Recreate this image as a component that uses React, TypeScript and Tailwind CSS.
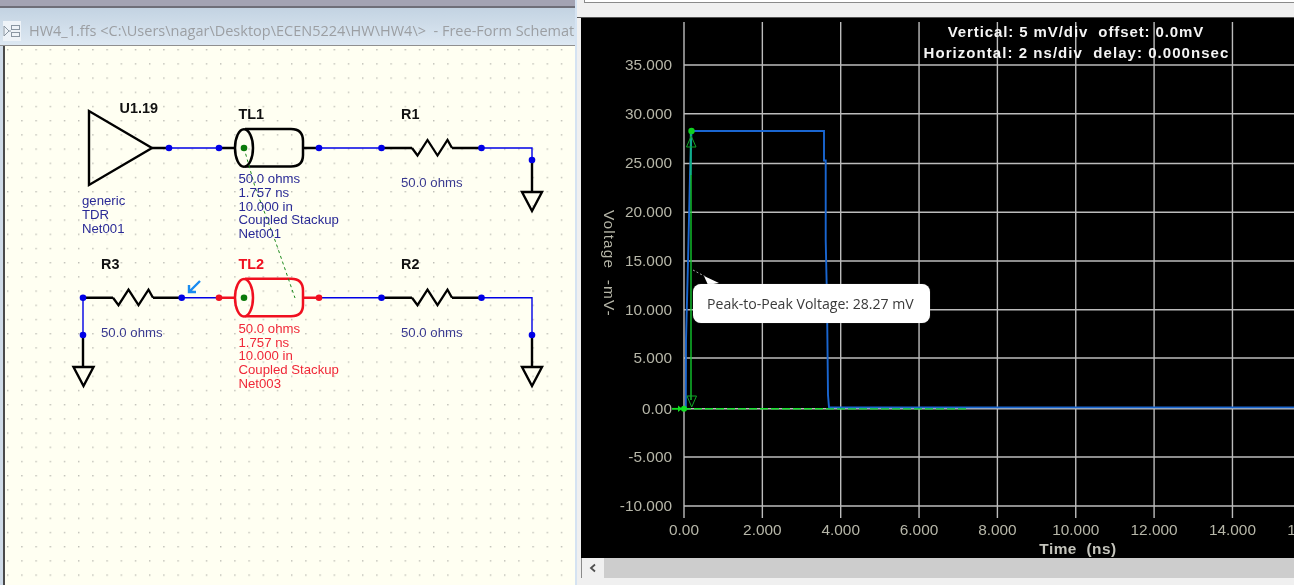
const LABEL = { fontFamily: '"Liberation Sans", Arial, sans-serif' };
const PRE = { whiteSpace: "pre" } as const;

function Node({ x, y, c = "#0000e6" }: { x: number; y: number; c?: string }) {
  return <circle cx={x} cy={y} r={3.3} fill={c} />;
}

function Ground({ x, y }: { x: number; y: number }) {
  return <polygon points={`${x - 10},${y} ${x + 10},${y} ${x},${y + 19}`} fill="none" stroke="#000" strokeWidth={2.4} />;
}

function Res({ x, y }: { x: number; y: number }) {
  const p = [[0, 0], [5.5, 7.5], [15.5, -8], [25.5, 7.5], [35.5, -8], [40, 0]].map(([a, b]) => `${x + a},${y + b}`).join(" ");
  return <polyline points={p} fill="none" stroke="#000" strokeWidth={2.3} strokeLinejoin="miter" />;
}

function Cyl({ y, c }: { y: number; c: string }) {
  const t = y - 19;
  const b = y + 18.5;
  return (
    <g fill="none" stroke={c} strokeWidth={2.5}>
      <ellipse cx={244} cy={y} rx={9} ry={18.7} />
      <path d={`M245 ${t}H291Q303 ${t} 303 ${y - 7}V${y + 7}Q303 ${b} 291 ${b}H245`} />
    </g>
  );
}

function Lines({ x, y, items, fill }: { x: number; y: number; items: string[]; fill: string }) {
  return (
    <g fill={fill} fontSize={13.2} style={LABEL}>
      {items.map((t, i) => (
        <text key={t} x={x} y={y + i * 13.8}>{t}</text>
      ))}
    </g>
  );
}

function Title({ x, y, t, fill = "#111" }: { x: number; y: number; t: string; fill?: string }) {
  return <text x={x} y={y} fill={fill} fontSize={14.4} fontWeight={700} style={LABEL}>{t}</text>;
}

function Schematic() {
  const blue = "#0000e6";
  const red = "#f01020";
  const rowA = 148;
  const rowB = 297.7;
  return (
    <svg viewBox="5 46 570 539" width={570} height={539} className="block">
      <defs>
        <pattern id="dots" x={7} y={49} width={14.2} height={14.2} patternUnits="userSpaceOnUse">
          <rect width={1.4} height={1.4} fill="#bcbcb4" />
        </pattern>
      </defs>
      <rect x={5} y={46} width={570} height={539} fill="#fffff2" />
      <rect x={5} y={46} width={570} height={539} fill="url(#dots)" />

      <polygon points="89,111 89,185 152,148" fill="none" stroke="#000" strokeWidth={2.4} />
      <g stroke={blue} strokeWidth={1.4} fill="none">
        <path d={`M169 ${rowA}H219M319 ${rowA}H381.5M481.5 ${rowA}H532V160`} />
        <path d={`M181.7 ${rowB}H219M319 ${rowB}H381.5M481.5 ${rowB}H532V335M83 ${rowB}V335`} />
      </g>
      <g stroke="#000" strokeWidth={2.4} fill="none">
        <path d={`M152 ${rowA}H169M219 ${rowA}H236M304 ${rowA}H319M381.5 ${rowA}H412M452 ${rowA}H481.5M532 160V192`} />
        <path d={`M83 ${rowB}H113M153 ${rowB}H181.7M381.5 ${rowB}H412M452 ${rowB}H481.5M83 335V367M532 335V367`} />
      </g>
      <path d={`M219 ${rowB}H236M304 ${rowB}H319`} stroke={red} strokeWidth={2.4} fill="none" />
      <Res x={412} y={rowA} />
      <Res x={113} y={rowB} />
      <Res x={412} y={rowB} />
      <Cyl y={rowA} c="#000" />
      <Cyl y={rowB} c={red} />
      <Ground x={532} y={192} />
      <Ground x={83.5} y={367} />
      <Ground x={532} y={367} />

      <path d="M244 148L255 187L276 243L295 298" stroke="#1c8a1c" strokeWidth={1} strokeDasharray="3 3" fill="none" />

      {[[169, rowA], [219, rowA], [319, rowA], [381.5, rowA], [481.5, rowA], [532, 160], [83, rowB], [181.7, rowB], [381.5, rowB], [481.5, rowB], [532, 335], [83, 335]].map(([x, y]) => (
        <Node key={`${x}-${y}`} x={x} y={y} />
      ))}
      <Node x={219} y={rowB} c={red} />
      <Node x={319} y={rowB} c={red} />
      <Node x={244} y={rowA} c="#0a7a0a" />
      <Node x={244} y={rowB} c="#0a7a0a" />

      <path d="M200 281L189.5 291.5M189 285V292H196" stroke="#1a8cf0" strokeWidth={2.4} fill="none" />

      <Title x={119.5} y={112.5} t="U1.19" />
      <Title x={238.5} y={119} t="TL1" />
      <Title x={401} y={119} t="R1" />
      <Title x={101} y={269} t="R3" />
      <Title x={238.5} y={269} t="TL2" fill={red} />
      <Title x={401} y={269} t="R2" />

      <Lines x={82} y={205} fill="#2a2a96" items={["generic", "TDR", "Net001"]} />
      <Lines x={238.5} y={183} fill="#2a2a96" items={["50.0 ohms", "1.757 ns", "10.000 in", "Coupled Stackup", "Net001"]} />
      <Lines x={238.5} y={332.8} fill="#f02838" items={["50.0 ohms", "1.757 ns", "10.000 in", "Coupled Stackup", "Net003"]} />
      <Lines x={401} y={186.5} fill="#3a3a90" items={["50.0 ohms"]} />
      <Lines x={101} y={336.5} fill="#3a3a90" items={["50.0 ohms"]} />
      <Lines x={401} y={336.5} fill="#3a3a90" items={["50.0 ohms"]} />
    </svg>
  );
}

const xs = [0, 1, 2, 3, 4, 5, 6, 7, 8].map((i) => 684 + i * 78.35);
const ys = [65, 113.7, 163.5, 212.3, 261, 309.7, 358, 408.7, 457, 506];
const yLabels = ["35.000", "30.000", "25.000", "20.000", "15.000", "10.000", "5.000", "0.00", "-5.000", "-10.000"];
const xLabels = ["0.00", "2.000", "4.000", "6.000", "8.000", "10.000", "12.000", "14.000", "16.000"];

function Plot() {
  const grid = "#bcbcbc";
  const tick = "#b6b6a8";
  return (
    <svg viewBox="581 18 713 540" width={713} height={540} className="block" style={LABEL}>
      <rect x={581} y={18} width={713} height={540} fill="#000" />
      <g stroke={grid} strokeWidth={1.4}>
        {xs.map((x) => <line key={x} x1={x} x2={x} y1={22} y2={518} />)}
        {ys.map((y) => <line key={y} x1={684} x2={1294} y1={y} y2={y} />)}
      </g>
      <g fill={tick} fontSize={15.4} textAnchor="end">
        {ys.map((y, i) => <text key={y} x={672} y={y + 4.8}>{yLabels[i]}</text>)}
      </g>
      <g fill={tick} fontSize={15.4} textAnchor="middle">
        {xs.map((x, i) => <text key={x} x={x} y={535}>{xLabels[i]}</text>)}
      </g>
      <text transform="translate(604 210) rotate(90)" fill={tick} fontSize={15.4} letterSpacing={1.1} style={PRE}>{"Voltage  -mV-"}</text>
      <text x={1078} y={554} fill="#c4c4bc" fontSize={15.4} fontWeight={700} textAnchor="middle" letterSpacing={0.5} style={PRE}>{"Time  (ns)"}</text>
      <g fill="#f4f4f4" fontSize={15} fontWeight={700} textAnchor="middle">
        <text x={1076} y={37} letterSpacing={0.9} style={PRE}>{"Vertical: 5 mV/div  offset: 0.0mV"}</text>
        <text x={1076.5} y={58} letterSpacing={1.05} style={PRE}>{"Horizontal: 2 ns/div  delay: 0.000nsec"}</text>
      </g>

      <line x1={672} x2={967} y1={408.7} y2={408.7} stroke="#18e030" strokeWidth={1.4} strokeDasharray="8 3" />
      <path d="M684 408.5L685.8 408L686 340L688 262L690 175L691.5 131H824V160.5H825.7V240L827 300L828 395L829 407.4H1294" stroke="#1a66d0" strokeWidth={1.9} fill="none" />
      <line x1={691} x2={691} y1={175} y2={400} stroke="#12c82e" strokeWidth={1.4} />
      <line x1={690.8} x2={690.8} y1={131} y2={175} stroke="#10b088" strokeWidth={2} />
      <line x1={672} x2={684} y1={408.7} y2={408.7} stroke="#10e020" strokeWidth={1.6} />
      <circle cx={691.5} cy={131} r={3.2} fill="#10d020" />
      <polygon points="686.5,147 696,147 691.2,136" fill="none" stroke="#10a828" strokeWidth={1} />
      <polygon points="687,396 696.5,396 691.7,407" fill="none" stroke="#10a828" strokeWidth={1} />
      <circle cx={684} cy={408.7} r={3} fill="#10e020" />
      <polygon points="678,405.5 682,408.7 678,412" fill="#10e020" />

      <polygon points="704,276 719,283 708,285" fill="#fff" />
      <path d="M693 270L706 277" stroke="#aaa" strokeWidth={1} strokeDasharray="2 2" />
    </svg>
  );
}

function DocIcon() {
  return (
    <div className="flex h-[20px] w-[20px] items-center justify-center bg-[#eef3f8]">
      <svg viewBox="0 0 18 14" width={18} height={14} fill="none" stroke="#8a96a2" strokeWidth={1}>
        <path d="M1 2L6 7L1 12Z" />
        <path d="M6 7H8" />
        <rect x={8.5} y={1.5} width={8} height={4} />
        <rect x={8.5} y={8.5} width={8} height={4} />
      </svg>
    </div>
  );
}

export default function App() {
  return (
    <div className="flex h-[585px] w-[1294px] overflow-hidden bg-[#f0f0f0] blur-[0.35px]">
      <div className="flex w-[575px] shrink-0 flex-col">
        <div className="h-[6px] bg-[#a3a3b3]" />
        <div className="h-[2px] bg-[#6e6e78]" />
        <div className="flex h-[37px] items-center gap-[6px] overflow-hidden bg-gradient-to-b from-[#c3d3e2] to-[#dde8f2] pl-[3px] pt-[9px]">
          <DocIcon />
          <span className="whitespace-pre pl-[2px] text-[14.5px] text-[#9c9fa3] [font-family:'Open_Sans',sans-serif]">
            {"HW4_1.ffs <C:\\Users\\nagar\\Desktop\\ECEN5224\\HW\\HW4\\>  - Free-Form Schematic"}
          </span>
        </div>
        <div className="h-px bg-[#8f8f8f]" />
        <div className="flex min-h-0 flex-1">
          <div className="w-[3px] bg-[#cfdbe8]" />
          <div className="w-[2px] bg-[#4a4a4a]" />
          <Schematic />
        </div>
      </div>
      <div className="w-[2px] shrink-0 bg-[#d5e3f2]" />
      <div className="flex w-[717px] shrink-0 flex-col">
        <div className="ml-[7px] h-[2px] border-l border-[#8a8a8a] bg-white" />
        <div className="ml-[7px] h-px bg-[#8a8a8a]" />
        <div className="h-[14px] bg-[#f0f0f0]" />
        <div className="h-px bg-[#555]" />
        <div className="relative ml-[4px] h-[540px] overflow-hidden">
          <Plot />
          <div className="absolute left-[112px] top-[266px] flex h-[39px] w-[237px] items-center rounded-[8px] bg-white pl-[14px] text-[14.1px] whitespace-nowrap text-[#3a3a3a] shadow-[0_0_1px_#777] [font-family:'Open_Sans',sans-serif]">
            Peak-to-Peak Voltage: 28.27 mV
          </div>
        </div>
        <div className="ml-[4px] flex h-[20px]">
          <div className="flex w-[23px] items-center justify-center border-l border-[#8a8a8a] bg-[#f0f0f0]">
            <svg viewBox="0 0 10 10" width={10} height={10} fill="none" stroke="#505050" strokeWidth={1.8}>
              <path d="M7 1.5L3 5L7 8.5" />
            </svg>
          </div>
          <div className="flex-1 bg-[#cdcdcd]" />
        </div>
        <div className="flex-1 bg-[#f0f0f0]" />
      </div>
    </div>
  );
}
